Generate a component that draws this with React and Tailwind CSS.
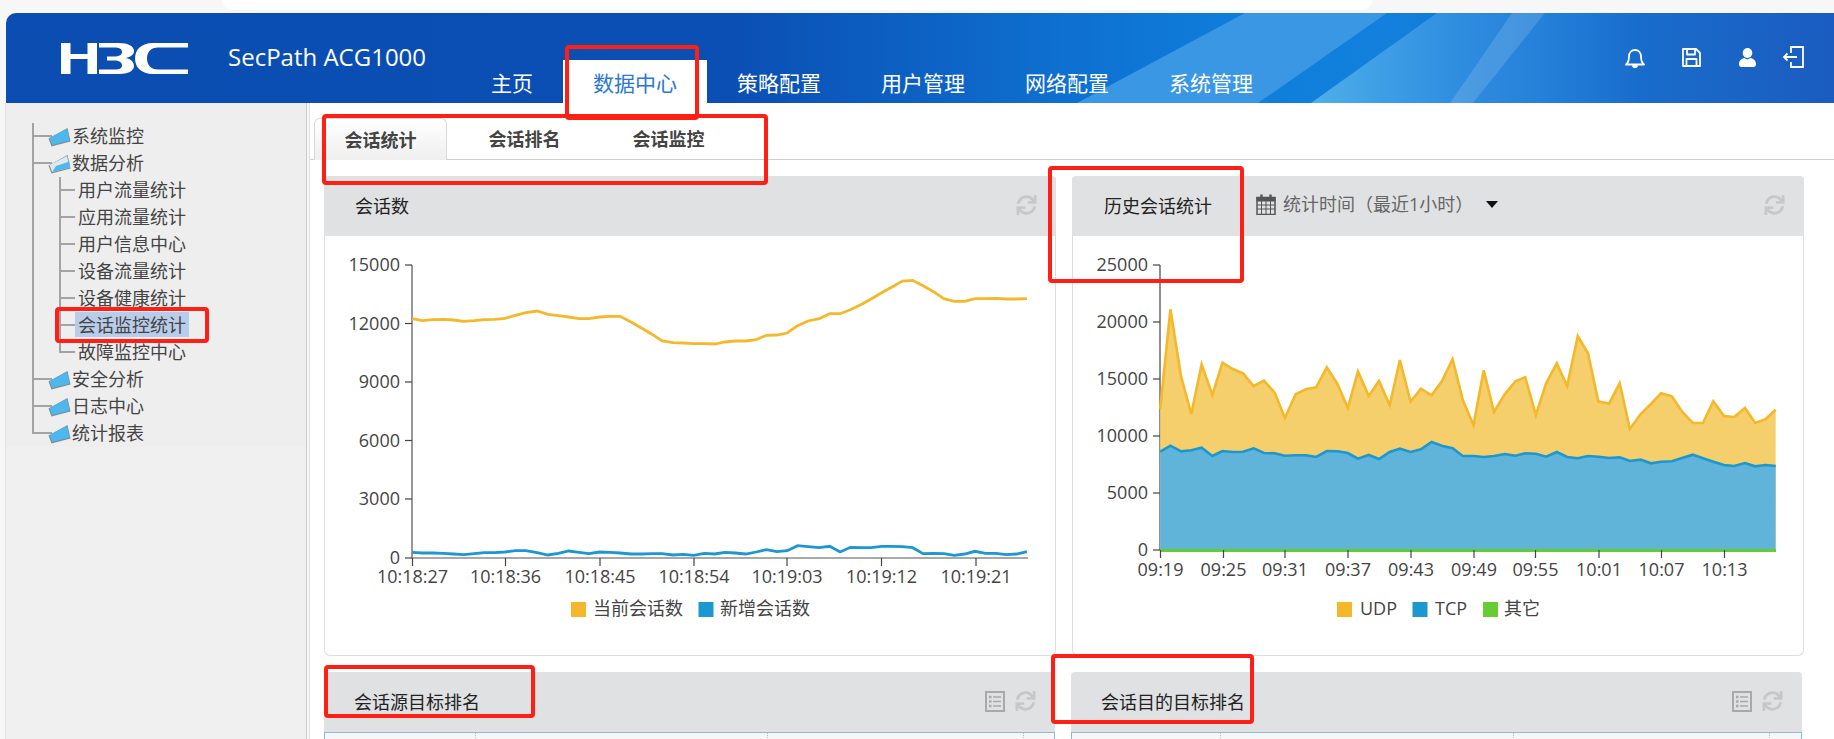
import React from 'react';
import { FaSync } from 'react-icons/fa';

// 折线数据取自截图，x/y 都是页面坐标的缩放值
const toLeft = ([x, y]) => `${(320 + x / 2.119).toFixed(1)},${(240 + y / 3).toFixed(1)}`;
const toRight = ([x, y]) => `${(1070 + x / 2.052).toFixed(1)},${(240 + y / 3).toFixed(1)}`;

const sessionX = [195, 217, 240, 262, 283, 305, 327, 348, 370, 392, 414, 436, 460, 483, 505, 527, 549, 570, 592, 614, 636, 659, 682, 705, 725, 748, 770, 792, 814, 836, 858, 880, 902, 924, 946, 968, 990, 1012, 1034, 1058, 1080, 1102, 1124, 1146, 1168, 1190, 1212, 1234, 1256, 1278, 1300, 1322, 1344, 1366, 1388, 1410, 1432, 1454, 1476, 1498];
const currentY = [236, 242, 239, 238, 240, 244, 242, 239, 238, 235, 226, 218, 213, 223, 227, 231, 236, 236, 231, 229, 229, 246, 265, 284, 303, 308, 309, 311, 311, 312, 306, 303, 303, 299, 286, 285, 279, 257, 243, 236, 221, 221, 209, 194, 177, 158, 141, 123, 121, 137, 155, 176, 184, 184, 176, 176, 175, 177, 177, 176];
const newY = [937, 939, 939, 940, 942, 944, 941, 938, 938, 936, 932, 932, 938, 945, 940, 933, 937, 941, 936, 937, 939, 942, 942, 941, 941, 945, 943, 946, 940, 942, 937, 939, 942, 936, 929, 935, 932, 917, 920, 923, 919, 936, 922, 923, 923, 919, 919, 920, 923, 941, 940, 941, 946, 942, 934, 940, 940, 944, 942, 935];

const historyX = [185, 206, 228, 249, 270, 292, 313, 334, 355, 377, 398, 420, 441, 463, 484, 505, 527, 549, 570, 591, 613, 634, 656, 677, 699, 720, 742, 763, 785, 806, 828, 849, 870, 892, 914, 934, 956, 977, 999, 1020, 1042, 1063, 1084, 1106, 1128, 1149, 1171, 1192, 1213, 1235, 1256, 1278, 1299, 1320, 1342, 1363, 1385, 1406, 1427, 1448];
const udpY = [507, 208, 410, 522, 373, 465, 368, 387, 400, 438, 422, 458, 534, 463, 448, 442, 382, 432, 504, 394, 468, 423, 496, 360, 485, 446, 466, 424, 358, 480, 556, 391, 516, 463, 424, 412, 525, 430, 370, 438, 288, 340, 484, 491, 430, 567, 522, 492, 460, 469, 515, 549, 548, 484, 528, 531, 504, 549, 538, 509];
const tcpY = [635, 617, 634, 631, 623, 648, 633, 636, 635, 625, 639, 640, 647, 646, 646, 651, 633, 634, 639, 656, 645, 657, 636, 626, 636, 628, 606, 617, 625, 648, 648, 651, 648, 642, 647, 640, 641, 650, 636, 651, 655, 648, 650, 654, 652, 663, 659, 670, 665, 664, 654, 644, 655, 665, 675, 678, 669, 679, 675, 678];

const currentLine = sessionX.map((x, i) => toLeft([x, currentY[i]])).join(' ');
const newLine = sessionX.map((x, i) => toLeft([x, newY[i]])).join(' ');
const udpLine = historyX.map((x, i) => toRight([x, udpY[i]])).join(' ');
const tcpLine = historyX.map((x, i) => toRight([x, tcpY[i]])).join(' ');

const navItems = ['主页', '数据中心', '策略配置', '用户管理', '网络配置', '系统管理'];

const leftYTicks = [['15000', 265], ['12000', 323.5], ['9000', 382], ['6000', 440.5], ['3000', 499], ['0', 558]];
const leftXTicks = [['10:18:27', 412.5], ['10:18:36', 505.5], ['10:18:45', 600], ['10:18:54', 694], ['10:19:03', 787], ['10:19:12', 881.5], ['10:19:21', 976]];
const rightYTicks = [['25000', 265], ['20000', 322], ['15000', 379], ['10000', 436], ['5000', 493], ['0', 550]];
const rightXTicks = [['09:19', 1160.5], ['09:25', 1223.5], ['09:31', 1285], ['09:37', 1348], ['09:43', 1411], ['09:49', 1474], ['09:55', 1535.5], ['10:01', 1599], ['10:07', 1661.5], ['10:13', 1724.5]];

const Logo = () => (
  <svg width="127" height="31" viewBox="0 0 127 31" className="shrink-0" fill="#fff">
    <rect x="0" y="0" width="9.5" height="31" />
    <rect x="26.5" y="0" width="9.5" height="31" />
    <rect x="9" y="11" width="18" height="5" />
    <path d="M38 0 H58 C67 0 73 3 73 8 C73 12 69 14.5 64 15 C69 15.5 73 18.5 73 23 C73 28 67 31 58 31 H38 V26.5 H53 C59 26.5 61 25 61 22.5 C61 19 58 17.5 53 17.5 H46 V13.5 H53 C58 13.5 61 12 61 9 C61 6 59 4.5 53 4.5 H38 Z" />
    <path d="M127 0 H92 C80 0 74 7 74 15.5 C74 24 80 31 92 31 H127 V26.5 H97 C90 26.5 86 22 86 15.5 C86 9 90 4.5 97 4.5 H127 Z" />
  </svg>
);

const Bell = () => (
  <svg width="20" height="21" viewBox="0 0 20 21" fill="none" stroke="#fff" strokeWidth="1.8" strokeLinejoin="round">
    <path d="M1 16.5 C3.5 14.5 4 12 4 8.5 C4 4.5 6.5 2 10 2 C13.5 2 16 4.5 16 8.5 C16 12 16.5 14.5 19 16.5 Z" />
    <path d="M8 18 C8.5 19.8 11.5 19.8 12 18 Z" fill="#fff" />
  </svg>
);

const Floppy = () => (
  <svg width="19" height="19" viewBox="0 0 19 19" fill="none" stroke="#fff" strokeWidth="1.8" strokeLinejoin="round">
    <path d="M1 1 H14 L18 5 V18 H1 Z" />
    <path d="M5 1 V6.5 H13 V1" />
    <path d="M4.5 18 V11 H14.5 V18" />
  </svg>
);

const UserSolid = () => (
  <svg width="17" height="19" viewBox="0 0 17 19" fill="#fff">
    <ellipse cx="8.5" cy="5" rx="4.8" ry="5" />
    <path d="M0 16 C0 12.5 2.5 10.5 5.5 10 L8.5 11.5 L11.5 10 C14.5 10.5 17 12.5 17 16 C17 18 16 19 14.5 19 H2.5 C1 19 0 18 0 16 Z" />
  </svg>
);

const LogoutIcon = () => (
  <svg width="22" height="22" viewBox="0 0 22 22" fill="none" stroke="#fff" strokeWidth="1.8">
    <path d="M9 7 V1 H21 V21 H9 V16" />
    <path d="M15 11 H2 M5.5 7.5 L2 11 L5.5 14.5" />
  </svg>
);

const Folder = ({ open }) => (
  <svg width="24" height="20" viewBox="0 0 24 20" className="shrink-0 -ml-[4px] mt-[4px]">
    <path d="M0.5 11.5 L3.5 19.5 L22.5 14.5 L19.5 1 Z" fill="#7f8c96" />
    <path d="M1.5 11 L19 2 L21.5 13.5 L4.2 18 Z" fill={open ? '#dfe9ec' : '#4db8ee'} />
    {open && <path d="M4.2 18 L8 12 L21.5 7.5 L21.5 13.5 Z" fill="#4db8ee" />}
  </svg>
);

const TopNode = ({ label, open, last }) => (
  <div className={`flex h-[27px] border-[#a3a3a3] ${last ? '' : 'border-l-2'}`}>
    <span className={`h-[14px] border-b-2 border-[#a3a3a3] shrink-0 ${last ? 'w-[20px] border-l-2' : 'w-[18px]'}`} />
    <Folder open={open} />
    <span className="leading-[27px]">{label}</span>
  </div>
);

const SubNode = ({ label, active, last }) => (
  <div className={`flex h-[27px] border-[#a3a3a3] ${last ? '' : 'border-l-2'}`}>
    <span className={`h-[14px] border-b-2 border-[#a3a3a3] shrink-0 ${last ? 'w-[16px] border-l-2' : 'w-[14px]'}`} />
    <span className={`h-[25px] px-[3px] leading-[27px] ${active ? 'bg-[#b9cdea]' : ''}`}>{label}</span>
  </div>
);

const Refresh = () => <FaSync className="text-[#c6c7c9] w-[21px] h-[20px]" />;

const ListIcon = () => (
  <svg width="20" height="21" viewBox="0 0 20 21" fill="none" stroke="#a9a9a9">
    <rect x="1" y="1" width="18" height="19" strokeWidth="2" />
    <path d="M8 6 H16 M8 10.5 H16 M8 15 H16" strokeWidth="1.5" />
    <path d="M4 6 H6.5 M4 10.5 H6.5 M4 15 H6.5" strokeWidth="2.5" />
  </svg>
);

const CalendarIcon = () => (
  <svg width="20" height="21" viewBox="0 0 20 21" fill="none" stroke="#555" className="shrink-0">
    <rect x="1" y="3.5" width="18" height="17" strokeWidth="1.5" />
    <rect x="1" y="3.5" width="18" height="3.5" fill="#555" strokeWidth="1" />
    <path d="M1 11 H19 M1 15 H19 M5.5 7 V20 M10 7 V20 M14.5 7 V20" strokeWidth="1" />
    <path d="M5.5 0.5 V5 M14.5 0.5 V5" strokeWidth="2.4" />
  </svg>
);

const PanelHeader = ({ children, actions }) => (
  <div className="flex items-center justify-between h-[60px] bg-[#e0e1e3] rounded-t-[4px] text-[18px] text-[#222]">
    {children}
    <div className="flex items-center gap-[10px] pr-[19px] pb-[2px]">{actions}</div>
  </div>
);

const RankPanel = ({ title, cols }) => (
  <div className="w-[731px]">
    <PanelHeader actions={<><ListIcon /><Refresh /></>}>
      <span className="pl-[30px]">{title}</span>
    </PanelHeader>
    <div className="flex h-[20px] bg-[#f7f7f7] border-t border-x border-[#8fb8e8]">
      <div className={`${cols[0]} border-r border-dotted border-[#bbb]`} />
      <div className={`${cols[1]} border-r border-dotted border-[#bbb]`} />
      <div className={`${cols[2]} border-r border-dotted border-[#bbb]`} />
      <div className="flex-1" />
    </div>
  </div>
);

const LegendItem = ({ x, color, label, textX }) => (
  <>
    <rect x={x} y="602" width="15" height="15" fill={color} />
    <text x={textX} y="615" fontSize="18" fill="#444">{label}</text>
  </>
);

const SessionChart = () => (
  <svg width="730" height="419" viewBox="325 236 730 419" className="block">
    <path d="M412 265 V558 H1028" fill="none" stroke="#555" strokeWidth="1.2" />
    {leftYTicks.map(([label, y]) => (
      <g key={label}>
        <path d={`M405 ${y} H412`} stroke="#444" strokeWidth="1.2" />
        <text x="400" y={y + 6} textAnchor="end" fontSize="18" fill="#444">{label}</text>
      </g>
    ))}
    {leftXTicks.map(([label, x]) => (
      <g key={label}>
        <path d={`M${x} 558 V566`} stroke="#444" strokeWidth="1.2" />
        <text x={x} y="583" textAnchor="middle" fontSize="18" fill="#444">{label}</text>
      </g>
    ))}
    <polyline points={currentLine} fill="none" stroke="#f4b82a" strokeWidth="2.8" />
    <polyline points={newLine} fill="none" stroke="#1c97d0" strokeWidth="2.8" />
    <LegendItem x="571" color="#f4b82a" label="当前会话数" textX="593" />
    <LegendItem x="698.5" color="#1c97d0" label="新增会话数" textX="720" />
  </svg>
);

const HistoryChart = () => (
  <svg width="730" height="419" viewBox="1073 236 730 419" className="block">
    <path d="M1160 265 V550" fill="none" stroke="#444" strokeWidth="1.2" />
    <polygon points={`1160.2,550 ${udpLine} 1775.6,550`} fill="#f5cf6b" />
    <polygon points={`1160.2,550 ${tcpLine} 1775.6,550`} fill="#60b3d9" />
    <polyline points={udpLine} fill="none" stroke="#f4b82a" strokeWidth="2.6" />
    <polyline points={tcpLine} fill="none" stroke="#1c97d0" strokeWidth="2.6" />
    <path d="M1160 550.5 H1776" stroke="#66cc33" strokeWidth="3" />
    {rightYTicks.map(([label, y]) => (
      <g key={label}>
        <path d={`M1153 ${y} H1160`} stroke="#444" strokeWidth="1.2" />
        <text x="1148" y={y + 6} textAnchor="end" fontSize="18" fill="#444">{label}</text>
      </g>
    ))}
    {rightXTicks.map(([label, x]) => (
      <g key={label}>
        <path d={`M${x} 550 V558`} stroke="#444" strokeWidth="1.2" />
        <text x={x} y="576" textAnchor="middle" fontSize="18" fill="#444">{label}</text>
      </g>
    ))}
    <LegendItem x="1337" color="#f4b82a" label="UDP" textX="1360" />
    <LegendItem x="1412.5" color="#1c97d0" label="TCP" textX="1435" />
    <LegendItem x="1483" color="#66cc33" label="其它" textX="1504" />
  </svg>
);

export default function App() {
  return (
    <div className="relative h-[739px] overflow-hidden bg-[#f7f7f7] font-['Open_Sans','Noto_Sans_CJK_SC',sans-serif]">
      {/* 浏览器顶部残留 */}
      <div className="h-[13px]">
        <div className="ml-[222px] w-[1150px] h-[10px] bg-white rounded-b-[14px]" />
      </div>

      <div className="pl-[6px]">
        <header className="relative flex items-start h-[90px] rounded-tl-[10px] overflow-hidden bg-[linear-gradient(90deg,#0b4db1_0%,#0b4fb4_40%,#0e70d0_58%,#0f7fdb_68%,#1280dc_76%,#1a68c8_92%,#1a5cbf_100%)]">
          <svg className="absolute inset-0" width="1828" height="90" viewBox="6 13 1828 90">
            <defs>
              <linearGradient id="band2" x1="0" y1="0" x2="1" y2="0">
                <stop offset="0" stopColor="#4fb0ea" />
                <stop offset="0.5" stopColor="#3a93e2" stopOpacity="0.65" />
                <stop offset="1" stopColor="#3a93e2" stopOpacity="0" />
              </linearGradient>
            </defs>
            <polygon points="1077,103 1245,13 1387,13 1258,103" fill="#3a97e3" />
            <polygon points="1311,103 1437,13 1640,13 1640,103" fill="url(#band2)" />
            <polygon points="1450,103 1512,13 1545,13 1473,103" fill="#fff" fillOpacity="0.14" />
          </svg>
          <div className="relative flex items-start w-full h-full">
            <div className="ml-[55px] mt-[30px]"><Logo /></div>
            <div className="ml-[40px] mt-[29px] w-[204px] text-[24px] leading-[30px] whitespace-nowrap text-white">SecPath ACG1000</div>
            <nav className="ml-[29px] mt-[47px] h-[43px] flex">
              {navItems.map((item) => (
                <div
                  key={item}
                  className={`px-[30px] h-[43px] leading-[47px] text-[21px] whitespace-nowrap ${item === '数据中心' ? 'bg-white text-[#2a78d0]' : 'text-white'}`}
                >
                  {item}
                </div>
              ))}
            </nav>
            <div className="ml-auto mr-[30px] mt-[33px] flex items-start">
              <div className="mt-[2px]"><Bell /></div>
              <div className="ml-[37px] mt-[2px]"><Floppy /></div>
              <div className="ml-[38px] mt-[2px]"><UserSolid /></div>
              <div className="ml-[26px]"><LogoutIcon /></div>
            </div>
          </div>
        </header>
      </div>

      <div className="flex pl-[5px] h-[636px]">
        <aside className="flex flex-col w-[302px] shrink-0 border-x border-l-[#e2e2e2] border-r-[#cccccc] bg-[#f0f0f0] text-[18px] text-[#444]">
          <div className="h-[344px] bg-[#eeeeee] pt-[20px] pl-[26px]">
            <TopNode label="系统监控" />
            <TopNode label="数据分析" open />
            <div className="border-l-2 border-[#a3a3a3] pl-[25px]">
              <SubNode label="用户流量统计" />
              <SubNode label="应用流量统计" />
              <SubNode label="用户信息中心" />
              <SubNode label="设备流量统计" />
              <SubNode label="设备健康统计" />
              <SubNode label="会话监控统计" active />
              <SubNode label="故障监控中心" last />
            </div>
            <TopNode label="安全分析" />
            <TopNode label="日志中心" />
            <TopNode label="统计报表" last />
          </div>
        </aside>

        <main className="flex-1 ml-[2px] border-l border-[#e0e0e0] bg-white">
          <div className="flex gap-[11px] h-[57px] pt-[15px] pl-[4px] border-b border-[#cfcfcf]">
            <div className="w-[133px] h-[42px] leading-[42px] text-center text-[18px] font-bold text-[#444] border-x border-t border-[#d8d8d8] rounded-t-[6px] bg-gradient-to-b from-white to-[#efefef]">会话统计</div>
            <div className="w-[133px] h-[41px] leading-[42px] text-center text-[18px] font-bold text-[#444]">会话排名</div>
            <div className="w-[133px] h-[41px] leading-[42px] text-center text-[18px] font-bold text-[#444]">会话监控</div>
          </div>

          <div className="pl-[14px] pr-[30px] pt-[16px]">
            <div className="grid grid-cols-2 gap-4 h-[480px]">
              <section>
                <PanelHeader actions={<Refresh />}>
                  <span className="pl-[31px]">会话数</span>
                </PanelHeader>
                <div className="h-[420px] border-x border-b border-[#dddddd] rounded-b-[6px]">
                  <SessionChart />
                </div>
              </section>
              <section>
                <PanelHeader actions={<Refresh />}>
                  <div className="flex items-center">
                    <span className="pl-[32px] pr-[44px]">历史会话统计</span>
                    <div className="flex items-center mb-[4px]">
                      <CalendarIcon />
                      <span className="pl-[7px] text-[#666]">统计时间（最近1小时）</span>
                      <svg width="12" height="7" viewBox="0 0 12 7" className="ml-[13px]"><polygon points="0,0 12,0 6,7" fill="#111" /></svg>
                    </div>
                  </div>
                </PanelHeader>
                <div className="h-[420px] border-x border-b border-[#dddddd] rounded-b-[6px]">
                  <HistoryChart />
                </div>
              </section>
            </div>

            <div className="flex gap-[16px] mt-4">
              <RankPanel title="会话源目标排名" cols={['w-[151px]', 'w-[292px]', 'w-[256px]']} />
              <RankPanel title="会话目的目标排名" cols={['w-[149px]', 'w-[293px]', 'w-[256px]']} />
            </div>
          </div>
        </main>
      </div>

      {/* 截图上的红色标注框 */}
      <div className="absolute left-[565px] top-[45px] w-[134px] h-[75px] border-4 border-[#ff2015] rounded-[4px]" />
      <div className="absolute left-[322px] top-[114px] w-[446px] h-[71px] border-4 border-[#ff2015] rounded-[4px]" />
      <div className="absolute left-[55px] top-[307px] w-[154px] h-[36px] border-4 border-[#ff2015] rounded-[4px]" />
      <div className="absolute left-[1048px] top-[166px] w-[196px] h-[117px] border-4 border-[#ff2015] rounded-[4px]" />
      <div className="absolute left-[324px] top-[665px] w-[211px] h-[53px] border-4 border-[#ff2015] rounded-[4px]" />
      <div className="absolute left-[1051px] top-[654px] w-[203px] h-[70px] border-4 border-[#ff2015] rounded-[4px]" />
    </div>
  );
}
